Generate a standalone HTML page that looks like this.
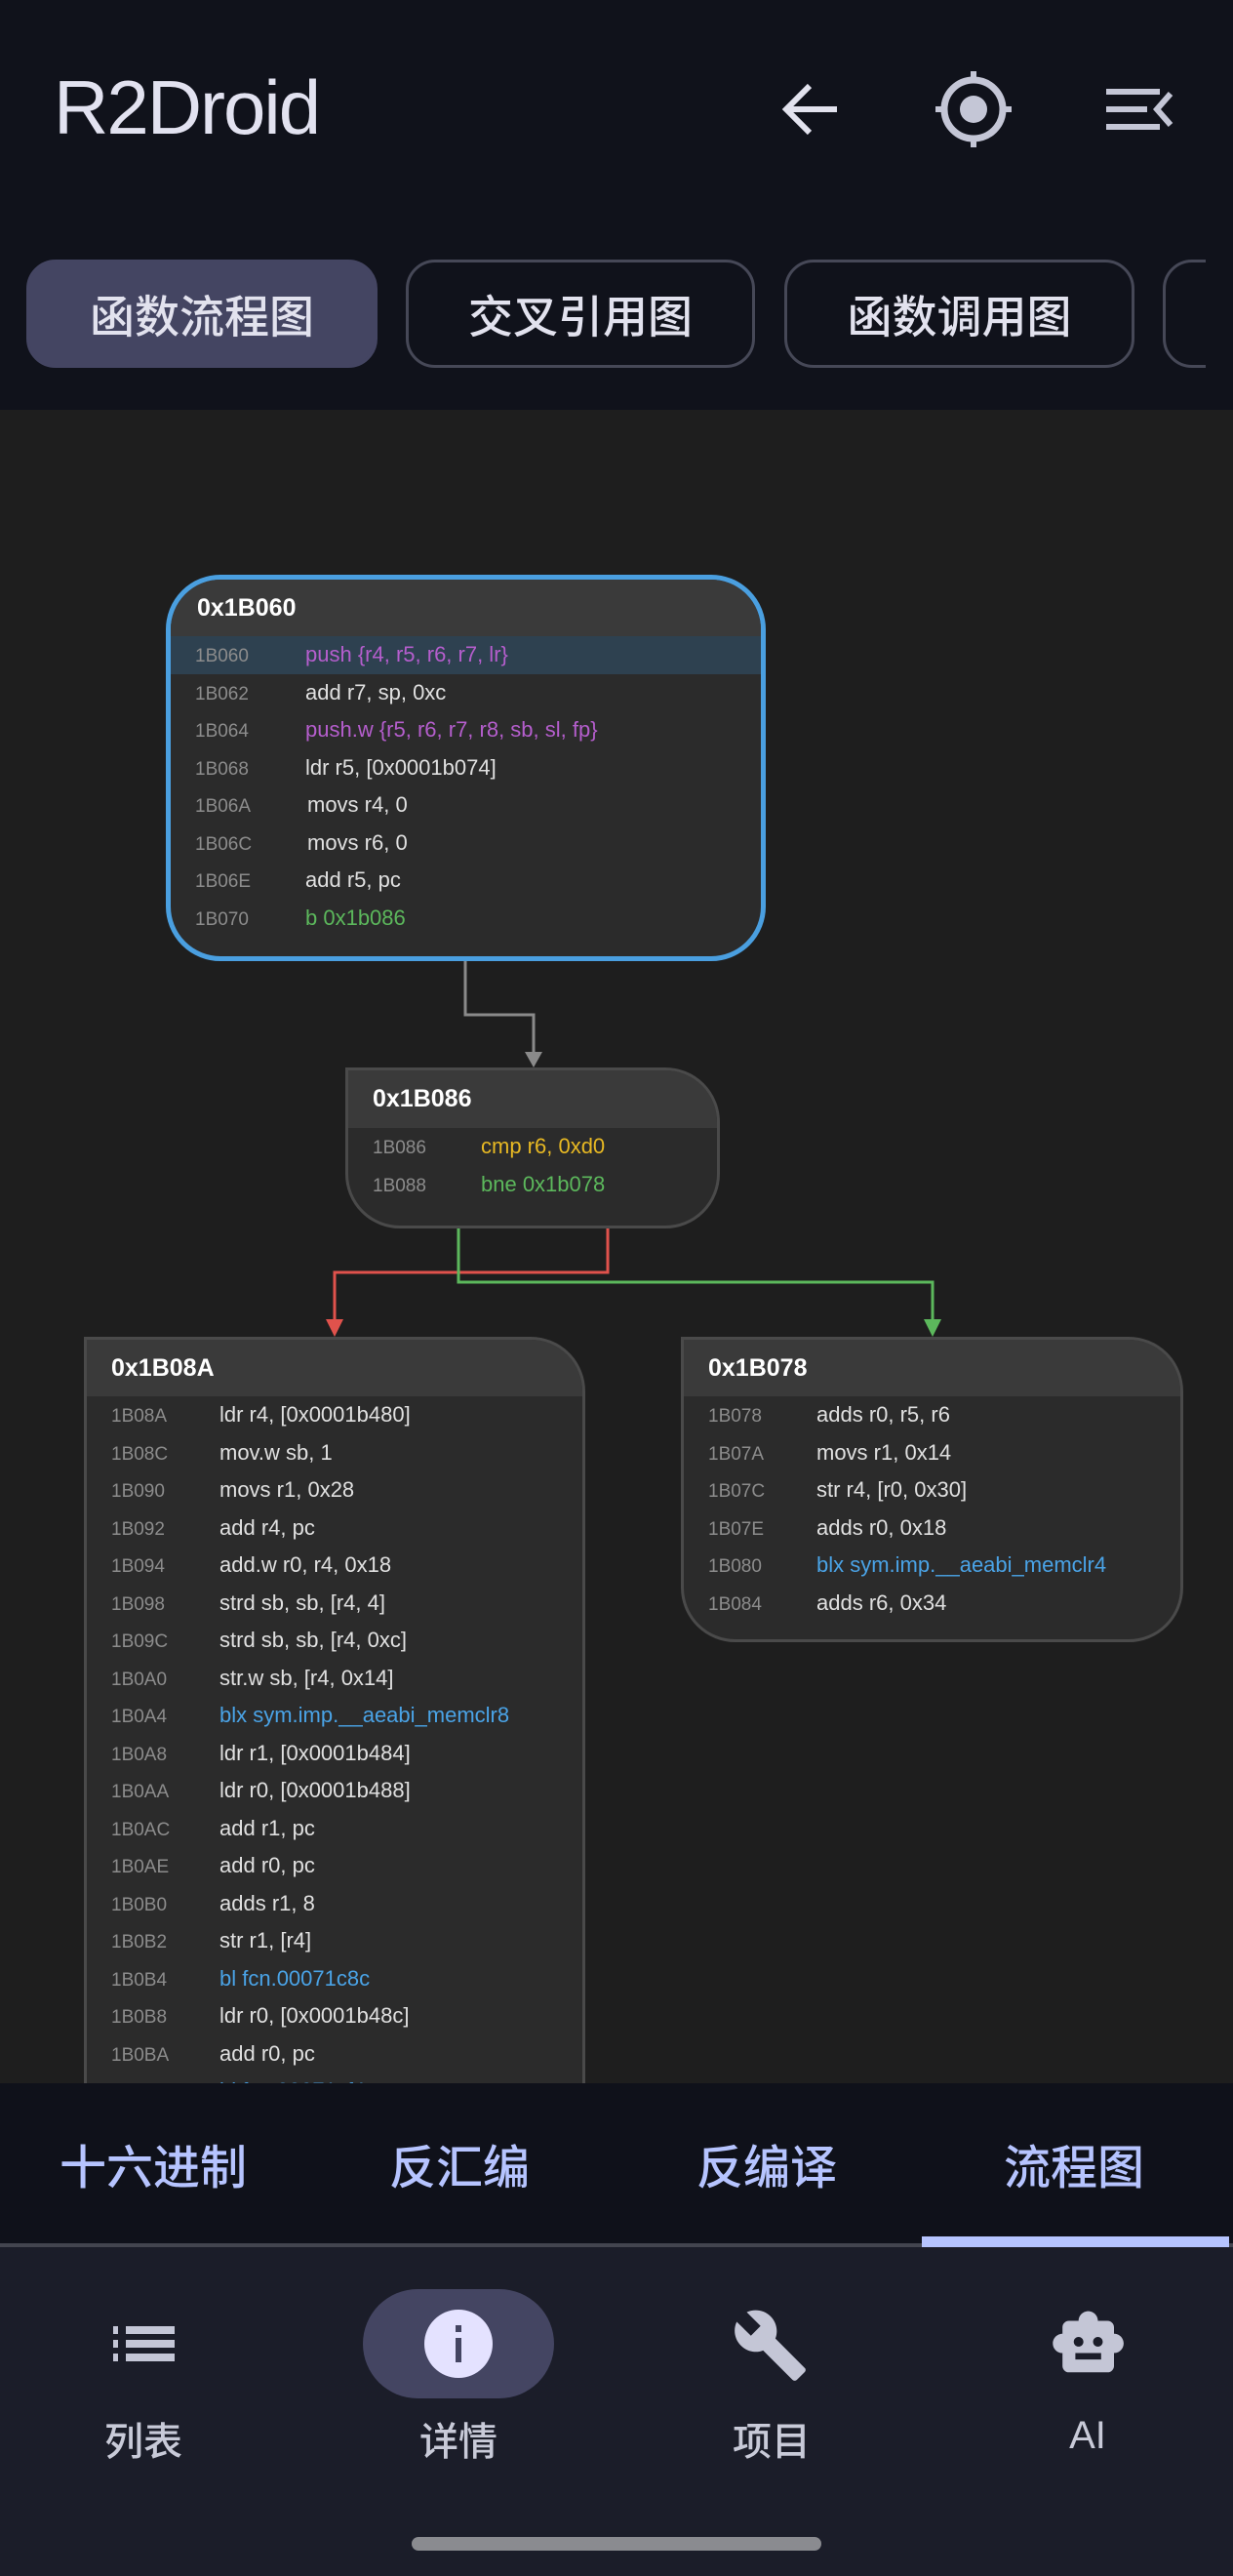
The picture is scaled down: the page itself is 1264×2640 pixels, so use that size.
<!DOCTYPE html>
<html><head><meta charset="utf-8"><style>
*{margin:0;padding:0;box-sizing:border-box}
body{width:1264px;height:2640px;background:#1e1e1e;font-family:"Liberation Sans","Noto Sans CJK SC",sans-serif;position:relative;overflow:hidden}
.abs{position:absolute}
#top{left:0;top:0;width:1264px;height:420px;background:#10121b}
.tab{position:absolute;top:266px;height:111px;border:3px solid #464857;border-radius:30px;color:#e2e2ee;font-size:46px;font-weight:500;display:flex;align-items:center;justify-content:center;font-family:"Noto Sans CJK SC",sans-serif}
.node{position:absolute;background:#2b2b2b;border:3px solid #4a4a4a;border-radius:0 56px 56px 56px;overflow:hidden}
.node .hd{height:58px;background:#3a3a3a;color:#fff;font-weight:bold;font-size:25px;padding-left:25px;line-height:58px}
.row{height:38.5px;line-height:38.5px;position:relative;font-size:22px;color:#e0e0e0;white-space:nowrap}
.row .a{position:absolute;left:25px;top:2px;color:#8c8c8c;font-size:19px}
.row .i{position:absolute;left:136px}
.pu{color:#b55ecd}.gr{color:#5cb85c}.bl{color:#4aa3e6}.ye{color:#e8b923}
.sel{background:#2e4150}
#bt{left:0;top:2135px;width:1264px;height:165px;background:#0f111a}
.bti{position:absolute;top:2182px;color:#b6c4ff;font-size:48px;font-weight:500;font-family:"Noto Sans CJK SC",sans-serif;transform:translateX(-50%)}
#nav{left:0;top:2303px;width:1264px;height:337px;background:#1b1d29}
.nl{position:absolute;top:2470px;color:#c8cad8;font-size:40px;font-weight:500;font-family:"Noto Sans CJK SC",sans-serif;transform:translateX(-50%)}
</style></head><body>
<div id="top" class="abs"></div>
<div class="abs" style="left:55px;top:60px;color:#e2e2f0;font-size:78px;line-height:100px;letter-spacing:-2px">R2Droid</div>
<svg class="abs" style="left:790px;top:70px" width="440" height="90" viewBox="790 70 440 90">
<path d="M858 112H806M830 88L806 112L830 136" stroke="#e2e2ee" stroke-width="6" fill="none"/>
<circle cx="998" cy="112" r="30" stroke="#c4c6d6" stroke-width="7" fill="none"/>
<circle cx="998" cy="112" r="14" fill="#c4c6d6"/>
<path d="M998 73v12M998 139v12M959 112h12M1025 112h12" stroke="#c4c6d6" stroke-width="6"/>
<path d="M1134 94h55M1134 112h42M1134 130h55" stroke="#c4c6d6" stroke-width="6"/>
<path d="M1200 96L1186 112L1200 128" stroke="#c4c6d6" stroke-width="6" fill="none"/>
</svg>
<div class="tab" style="left:27px;width:360px;background:#444562;border-color:#444562">函数流程图</div>
<div class="tab" style="left:416px;width:358px">交叉引用图</div>
<div class="tab" style="left:804px;width:359px">函数调用图</div>
<div class="abs" style="left:1192px;top:266px;width:44px;height:111px;overflow:hidden"><div style="width:120px;height:111px;border:3px solid #464857;border-radius:30px"></div></div>

<svg class="abs" style="left:0;top:420px" width="1264" height="1000" viewBox="0 420 1264 1000">
<path d="M477 985V1040H547V1084" stroke="#8a8a8a" stroke-width="3" fill="none"/>
<path d="M538 1078h18l-9 16z" fill="#8a8a8a"/>
<path d="M623 1259V1304H343V1360" stroke="#e0524c" stroke-width="3" fill="none"/>
<path d="M334 1352h18l-9 18z" fill="#e0524c"/>
<path d="M470 1259V1314H956V1360" stroke="#5cb85c" stroke-width="3" fill="none"/>
<path d="M947 1352h18l-9 18z" fill="#5cb85c"/>
</svg>

<div class="node" style="left:170px;top:589px;width:615px;height:396px;border:5px solid #4a9fe0;border-radius:56px">
<div class="hd" style="padding-left:27px">0x1B060</div>
<div class="row sel"><span class="a">1B060</span><span class="i pu" style="left:138px">push {r4, r5, r6, r7, lr}</span></div>
<div class="row"><span class="a">1B062</span><span class="i" style="left:138px">add r7, sp, 0xc</span></div>
<div class="row"><span class="a">1B064</span><span class="i pu" style="left:138px">push.w {r5, r6, r7, r8, sb, sl, fp}</span></div>
<div class="row"><span class="a">1B068</span><span class="i" style="left:138px">ldr r5, [0x0001b074]</span></div>
<div class="row"><span class="a">1B06A</span><span class="i" style="left:140px">movs r4, 0</span></div>
<div class="row"><span class="a">1B06C</span><span class="i" style="left:140px">movs r6, 0</span></div>
<div class="row"><span class="a">1B06E</span><span class="i" style="left:138px">add r5, pc</span></div>
<div class="row"><span class="a">1B070</span><span class="i gr" style="left:138px">b 0x1b086</span></div>
</div>

<div class="node" style="left:354px;top:1094px;width:384px;height:165px">
<div class="hd" style="height:59px">0x1B086</div>
<div class="row"><span class="a">1B086</span><span class="i ye">cmp r6, 0xd0</span></div>
<div class="row"><span class="a">1B088</span><span class="i gr">bne 0x1b078</span></div>
</div>

<div class="node" style="left:86px;top:1370px;width:514px;height:900px">
<div class="hd">0x1B08A</div>
<div class="row"><span class="a">1B08A</span><span class="i">ldr r4, [0x0001b480]</span></div>
<div class="row"><span class="a">1B08C</span><span class="i">mov.w sb, 1</span></div>
<div class="row"><span class="a">1B090</span><span class="i">movs r1, 0x28</span></div>
<div class="row"><span class="a">1B092</span><span class="i">add r4, pc</span></div>
<div class="row"><span class="a">1B094</span><span class="i">add.w r0, r4, 0x18</span></div>
<div class="row"><span class="a">1B098</span><span class="i">strd sb, sb, [r4, 4]</span></div>
<div class="row"><span class="a">1B09C</span><span class="i">strd sb, sb, [r4, 0xc]</span></div>
<div class="row"><span class="a">1B0A0</span><span class="i">str.w sb, [r4, 0x14]</span></div>
<div class="row"><span class="a">1B0A4</span><span class="i bl">blx sym.imp.__aeabi_memclr8</span></div>
<div class="row"><span class="a">1B0A8</span><span class="i">ldr r1, [0x0001b484]</span></div>
<div class="row"><span class="a">1B0AA</span><span class="i">ldr r0, [0x0001b488]</span></div>
<div class="row"><span class="a">1B0AC</span><span class="i">add r1, pc</span></div>
<div class="row"><span class="a">1B0AE</span><span class="i">add r0, pc</span></div>
<div class="row"><span class="a">1B0B0</span><span class="i">adds r1, 8</span></div>
<div class="row"><span class="a">1B0B2</span><span class="i">str r1, [r4]</span></div>
<div class="row"><span class="a">1B0B4</span><span class="i bl">bl fcn.00071c8c</span></div>
<div class="row"><span class="a">1B0B8</span><span class="i">ldr r0, [0x0001b48c]</span></div>
<div class="row"><span class="a">1B0BA</span><span class="i">add r0, pc</span></div>
<div class="row"><span class="a">1B0BC</span><span class="i bl">bl fcn.00071cf4</span></div>
</div>

<div class="node" style="left:698px;top:1370px;width:515px;height:313px">
<div class="hd">0x1B078</div>
<div class="row"><span class="a">1B078</span><span class="i">adds r0, r5, r6</span></div>
<div class="row"><span class="a">1B07A</span><span class="i">movs r1, 0x14</span></div>
<div class="row"><span class="a">1B07C</span><span class="i">str r4, [r0, 0x30]</span></div>
<div class="row"><span class="a">1B07E</span><span class="i">adds r0, 0x18</span></div>
<div class="row"><span class="a">1B080</span><span class="i bl">blx sym.imp.__aeabi_memclr4</span></div>
<div class="row"><span class="a">1B084</span><span class="i">adds r6, 0x34</span></div>
</div>

<div id="bt" class="abs"></div>
<div class="bti" style="left:157px">十六进制</div>
<div class="bti" style="left:471px">反汇编</div>
<div class="bti" style="left:786px">反编译</div>
<div class="bti" style="left:1101px">流程图</div>
<div class="abs" style="left:0;top:2299px;width:1264px;height:4px;background:#43454f"></div>
<div class="abs" style="left:945px;top:2292px;width:315px;height:11px;background:#b6c4ff"></div>
<div id="nav" class="abs"></div>
<div class="abs" style="left:372px;top:2346px;width:196px;height:112px;border-radius:56px;background:#444562"></div>
<svg class="abs" style="left:0;top:2340px" width="1264" height="130" viewBox="0 2340 1264 130">
<g fill="#c4c6d6">
<rect x="116" y="2384" width="5" height="8"/><rect x="129" y="2384" width="50" height="8"/>
<rect x="116" y="2398" width="5" height="8"/><rect x="129" y="2398" width="50" height="8"/>
<rect x="116" y="2412" width="5" height="8"/><rect x="129" y="2412" width="50" height="8"/>
</g>
<circle cx="470" cy="2402" r="35" fill="#e4e2ff"/>
<rect x="467" y="2383" width="6" height="7" fill="#444562"/><rect x="467" y="2396" width="6" height="25" fill="#444562"/>
<g transform="translate(750 2364) scale(3.3)" fill="#c4c6d6"><path d="M22.7 19l-9.1-9.1c.9-2.3.4-5-1.5-6.9-2-2-5-2.4-7.4-1.3L9 6 6 9 1.6 4.7C.4 7.1.9 10.1 2.9 12.1c1.9 1.9 4.6 2.4 6.9 1.5l9.1 9.1c.4.4 1 .4 1.4 0l2.3-2.3c.5-.4.5-1.1.1-1.4z"/></g>
<g transform="translate(1076 2362) scale(3.3)" fill="#c4c6d6"><path d="M20 9V7c0-1.1-.9-2-2-2h-3c0-1.66-1.34-3-3-3S9 3.34 9 5H6c-1.1 0-2 .9-2 2v2c-1.66 0-3 1.34-3 3s1.34 3 3 3v4c0 1.1.9 2 2 2h12c1.1 0 2-.9 2-2v-4c1.66 0 3-1.34 3-3s-1.340-3-3-3zM7.5 11.5c0-.83.67-1.5 1.5-1.5s1.5.67 1.5 1.5S9.83 13 9 13s-1.5-.67-1.5-1.5zM16 17H8v-2h8v2zm-1-4c-.83 0-1.5-.67-1.5-1.5S14.17 10 15 10s1.5.67 1.5 1.5S15.830 13 15 13z"/></g>
</svg>
<div class="nl" style="left:147px">列表</div>
<div class="nl" style="left:470px">详情</div>
<div class="nl" style="left:791px">项目</div>
<div class="nl" style="left:1115px;top:2474px;font-family:'Liberation Sans',sans-serif;font-weight:normal">AI</div>
<div class="abs" style="left:422px;top:2600px;width:420px;height:14px;border-radius:7px;background:#8a8b90"></div>
</body></html>
